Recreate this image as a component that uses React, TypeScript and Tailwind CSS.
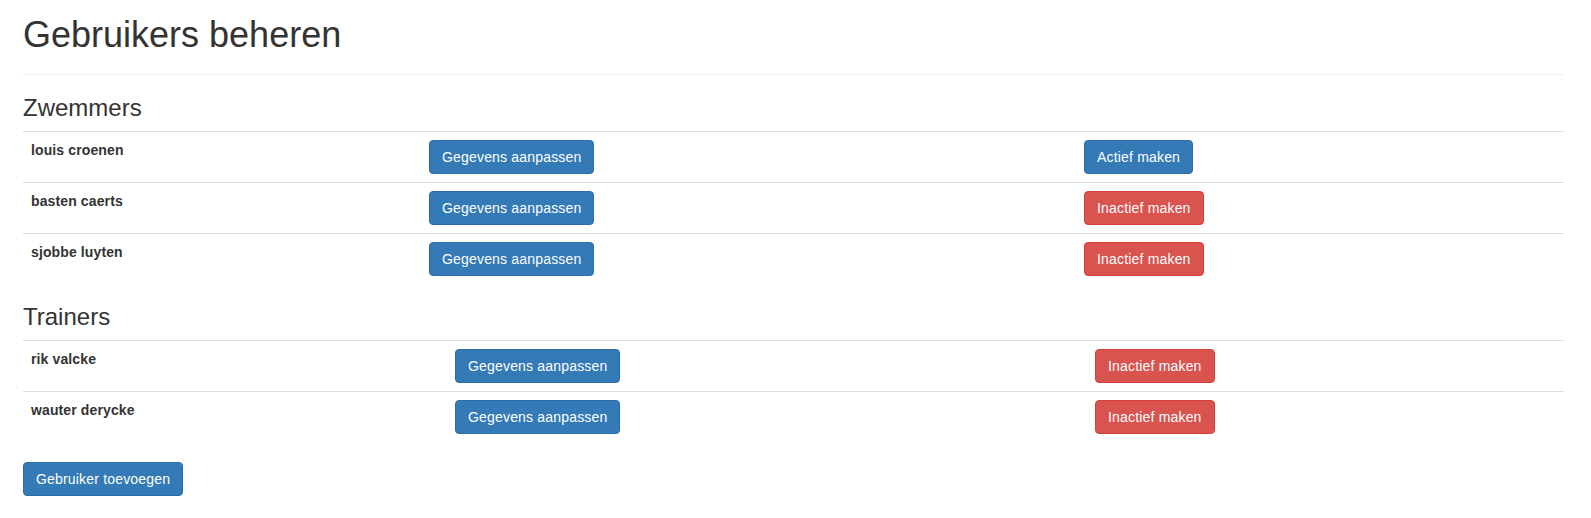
import React from "react";

type Member = { name: string; active: boolean };

const swimmers: Member[] = [
  { name: "louis croenen", active: false },
  { name: "basten caerts", active: true },
  { name: "sjobbe luyten", active: true },
];

const trainers: Member[] = [
  { name: "rik valcke", active: true },
  { name: "wauter derycke", active: true },
];

const PrimaryButton = ({ children }: { children: React.ReactNode }) => (
  <button
    type="button"
    className="inline-block whitespace-nowrap rounded-[4px] border border-[#2e6da4] bg-[#337ab7] px-3 py-1.5 text-sm leading-5 tracking-[0.18px] text-white hover:bg-[#286090]"
  >
    {children}
  </button>
);

const DangerButton = ({ children }: { children: React.ReactNode }) => (
  <button
    type="button"
    className="inline-block whitespace-nowrap rounded-[4px] border border-[#d43f3a] bg-[#d9534f] px-3 py-1.5 text-sm leading-5 tracking-[0.18px] text-white hover:bg-[#c9302c]"
  >
    {children}
  </button>
);

// column widths as the browser's auto table layout gave them in the original
const UserTable = ({ users, nameCol, editCol }: { users: Member[]; nameCol: string; editCol: string }) => (
  <table className="mb-5 w-full">
    <tbody>
      {users.map((user) => (
        <tr key={user.name}>
          <td className={`border-t border-[#ddd] p-2 align-top text-sm leading-5 font-bold tracking-[0.12px] ${nameCol}`}>
            {user.name}
          </td>
          <td className={`border-t border-[#ddd] p-2 align-top ${editCol}`}>
            <PrimaryButton>Gegevens aanpassen</PrimaryButton>
          </td>
          <td className="border-t border-[#ddd] p-2 align-top">
            {user.active ? <DangerButton>Inactief maken</DangerButton> : <PrimaryButton>Actief maken</PrimaryButton>}
          </td>
        </tr>
      ))}
    </tbody>
  </table>
);

const App = () => {
  return (
    <div className="min-h-screen bg-white pt-[15px] pr-[27px] pl-[23px] font-['Liberation_Sans',Arial,sans-serif] text-sm leading-5 text-[#333]">
      <div className="mb-5 border-b border-[#eee] pb-[9px]">
        <h1 className="mb-2.5 text-[36px] leading-[1.1] font-normal">Gebruikers beheren</h1>
      </div>

      <h3 className="mb-2.5 text-2xl leading-[1.1] font-normal">Zwemmers</h3>
      <UserTable users={swimmers} nameCol="w-[398px]" editCol="w-[655px]" />

      <h3 className="mb-2.5 text-2xl leading-[1.1] font-normal">Trainers</h3>
      <UserTable users={trainers} nameCol="w-[424px]" editCol="w-[640px]" />

      <PrimaryButton>Gebruiker toevoegen</PrimaryButton>
    </div>
  );
};

export default App;
